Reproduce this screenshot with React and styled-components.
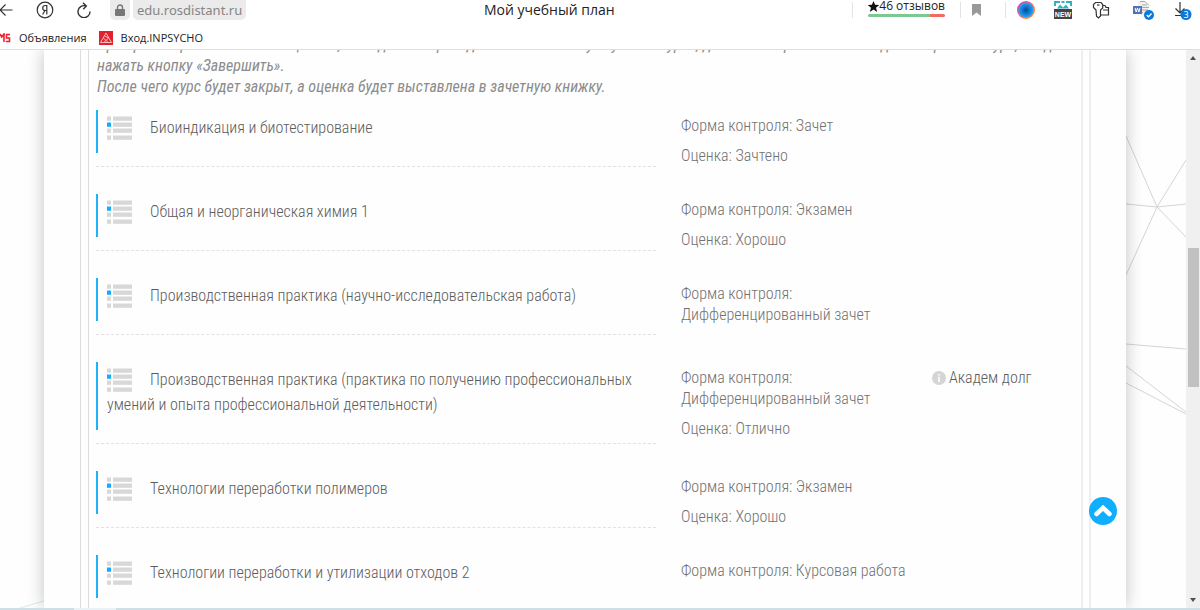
import React from "react";
import styled, { createGlobalStyle } from "styled-components";

const ui = `"Open Sans", "Noto Sans", sans-serif`;
const condensed = `"Roboto Condensed", "Roboto", sans-serif`;

const GlobalStyle = createGlobalStyle`
  * { box-sizing: border-box; }
  body { margin: 0; background: #fefefe; overflow: hidden; }
  ul, h1, h2, p { margin: 0; padding: 0; }
  ul { list-style: none; }
  svg { display: block; flex: none; }
`;

const Browser = styled.div`
  display: flex;
  flex-direction: column;
  height: 100vh;
  font-family: ${ui};
  color: #222;
`;

const Chrome = styled.header`
  flex: none;
  background: #fff;
  border-bottom: 1px solid #dedede;
`;

const Toolbar = styled.div`
  display: flex;
  align-items: center;
  height: 20px;
`;

const IconButton = styled.button`
  display: grid;
  place-items: center;
  flex: none;
  width: ${(p) => p.$width}px;
  height: 20px;
  padding: 0;
  border: 0;
  background: none;
`;

const AddressLock = styled(IconButton)`
  margin: 0 3px 0 19px;
  background: #ebebeb;
  border-radius: 0 0 5px 5px;
`;

const Address = styled.a`
  padding: 0 4px;
  border-radius: 0 0 5px 5px;
  background: #ebebeb;
  color: #858585;
  font-family: "Noto Sans", sans-serif;
  font-size: 13px;
  line-height: 20px;
  text-decoration: none;
`;

const PageName = styled.h1`
  flex: 1;
  font-size: 14px;
  line-height: 20px;
  font-weight: 400;
  text-align: center;
`;

const Divider = styled.span`
  width: 1px;
  height: 16px;
  background: #e3e3e3;
`;

const Rating = styled.a`
  align-self: flex-start;
  margin: 0 15px;
  color: #222;
  font-size: 12px;
  line-height: 12px;
  text-decoration: none;
  white-space: nowrap;

  &::after {
    content: "";
    display: block;
    height: 3px;
    border-radius: 2px;
    background: linear-gradient(90deg, #7cc893 81%, #f26b5e 81%);
  }
`;

const RatingText = styled.span`
  display: flex;
  align-items: center;
  padding-bottom: 2px;
`;

const Bookmarks = styled.nav`
  display: flex;
  align-items: center;
  height: 29px;
  padding-top: 7px;
`;

const Bookmark = styled.a`
  display: flex;
  align-items: center;
  gap: 8px;
  margin-right: 12px;
  color: #222;
  font-size: 11px;
  line-height: 16px;
  text-decoration: none;
`;

const Viewport = styled.div`
  position: relative;
  display: flex;
  flex: 1;
  min-height: 0;
`;

const Page = styled.div`
  position: relative;
  flex: 1;
  min-width: 0;
  overflow: hidden;
  padding: 0 60px 0 44px;
`;

const Network = styled.svg`
  position: absolute;
  top: 0;
  right: 0;
`;

const NetworkLeft = styled.svg`
  position: absolute;
  bottom: 0;
  left: 0;
`;

const Sheet = styled.main`
  position: relative;
  height: 100%;
  padding: 0 35px 0 36px;
  background: #fefefe;
  box-shadow: 0 0 16px rgba(0, 0, 0, 0.24);
`;

const Frame = styled.div`
  height: 100%;
  padding: 0 6px 0 7px;
  border-left: 1px solid #dcdcdc;
  border-right: 2px solid #efefef;
`;

const Plan = styled.section`
  height: 100%;
  padding: 0 7px;
  border-left: 1px solid #dcdcdc;
  border-right: 2px solid #efefef;
  overflow: hidden;
  font-family: ${condensed};
  font-weight: 300;
`;

const Intro = styled.p`
  margin-top: -16px;
  padding-left: 1px;
  margin-bottom: 13px;
  color: #8c8c8c;
  font-size: 16px;
  line-height: 21px;
  font-style: italic;
  font-weight: 400;
`;

const IntroLine = styled.span`
  display: block;
  white-space: nowrap;
`;

const Course = styled.li`
  display: grid;
  grid-template-columns: 585fr 251fr 142fr;
  align-items: start;
`;

const CourseMain = styled.div`
  margin: 0 25px 27px 0;
  padding-bottom: 13px;
  border-bottom: 1px dashed #e2e2e2;
`;

const CourseTitle = styled.h2`
  padding: 5px 0 13px 9px;
  border-left: 2px solid #1fb1fa;
  color: #5c5c5c;
  font-size: 16px;
  line-height: 25px;
  font-weight: 300;

  svg {
    display: inline-block;
    margin: -5px 18px -3px 0;
    vertical-align: middle;
  }
`;

const Details = styled.div`
  padding: 5px 16px 0 0;
  color: #717171;
  font-size: 16px;
  line-height: 21px;
`;

const Detail = styled.p`
  margin-bottom: 9px;
`;

const Debt = styled.p`
  display: flex;
  align-items: center;
  gap: 3px;
  padding-top: 5px;
  color: #5c5c5c;
  font-size: 16px;
  line-height: 21px;
`;

const Scrollbar = styled.div`
  display: flex;
  flex-direction: column;
  align-items: center;
  justify-content: space-between;
  flex: none;
  width: 14px;
  padding: 6px 0;
  background: #f0f0f0;
`;

const Track = styled.div`
  flex: 1;
  width: 11px;
  padding-top: 188px;
`;

const Thumb = styled.div`
  height: 139px;
  background: #c1c1c1;
`;

const ToTop = styled.button`
  position: absolute;
  right: 83px;
  bottom: 83px;
  display: grid;
  place-items: center;
  width: 28px;
  height: 28px;
  padding: 0;
  border: 0;
  border-radius: 50%;
  background: #10aeff;
`;

const Taskbar = styled.footer`
  flex: none;
  height: 2px;
  background: linear-gradient(90deg, #cfdfe6 74px, #e9f2f6 74px 116px, #cfdfe6 116px);
`;

const ListIcon = () => (
  <svg width="25" height="24" viewBox="0 0 25 24" aria-hidden="true">
    {[0, 6, 12, 19].map((y, i) => (
      <g key={y} fill="#d8d8d8">
        <rect x="0" y={y + 0.5} width="4" height="4.3" fill={i === 1 ? "#10aeff" : "#d8d8d8"} />
        <rect x="6" y={y + 0.5} width="19" height="4.3" />
      </g>
    ))}
  </svg>
);

const InfoIcon = () => (
  <svg width="14" height="14" viewBox="0 0 14 14" aria-hidden="true">
    <circle cx="7" cy="7" r="7" fill="#d5d5d5" />
    <path d="M6.2 3h1.6v1.5H6.2zM6.2 5.8h1.6V11H6.2z" fill="#fff" />
  </svg>
);

const Arrow = ({ down }) => (
  <svg width="6" height="4" viewBox="0 0 6 4" aria-hidden="true">
    <path d={down ? "M0 0h6L3 4z" : "M0 4h6L3 0z"} fill="#505050" />
  </svg>
);

const courses = [
  { title: "Биоиндикация и биотестирование", control: "Зачет", grade: "Зачтено" },
  { title: "Общая и неорганическая химия 1", control: "Экзамен", grade: "Хорошо" },
  { title: "Производственная практика (научно-исследовательская работа)", control: "Дифференцированный зачет" },
  {
    title: "Производственная практика (практика по получению профессиональных умений и опыта профессиональной деятельности)",
    control: "Дифференцированный зачет",
    grade: "Отлично",
    debt: "Академ долг",
  },
  { title: "Технологии переработки полимеров", control: "Экзамен", grade: "Хорошо" },
  { title: "Технологии переработки и утилизации отходов 2", control: "Курсовая работа" },
];

export default function App() {
  return (
    <Browser>
      <GlobalStyle />
      <Chrome>
        <Toolbar>
          <IconButton $width={13} aria-label="Назад">
            <svg width="13" height="14" viewBox="0 0 13 14" fill="none" stroke="#333" strokeWidth="1.2">
              <path d="M12.5 7H0M5.500 1.500L0 7l5.500 5.500" />
            </svg>
          </IconButton>
          <IconButton $width={64} aria-label="Яндекс">
            <svg width="18" height="18" viewBox="0 0 18 18" fill="none" stroke="#333" strokeWidth="1.2">
              <circle cx="9" cy="9" r="7.800" />
              <path d="M10.800 13.500v-9H9.300C7.600 4.500 6.700 5.500 6.700 7c0 1.500 1 2.500 2.500 2.500h1.500M9 9.500l-2.400 4" />
            </svg>
          </IconButton>
          <IconButton $width={14} aria-label="Обновить">
            <svg width="14" height="16" viewBox="0 0 14 16" fill="none" stroke="#333" strokeWidth="1.4">
              <path d="M13 9.500A6 6 0 1 1 9 4M6 .8L9.300 4 6.300 7.200" />
            </svg>
          </IconButton>
          <AddressLock $width={20} aria-label="Защищённое соединение">
            <svg width="10" height="12" viewBox="0 0 10 12">
              <path d="M2.500 5.500V3.500a2.500 2.500 0 0 1 5 0v2" fill="none" stroke="#777" strokeWidth="1.400" />
              <rect y="5" width="10" height="7" rx="1" fill="#777" />
            </svg>
          </AddressLock>
          <Address href="#">edu.rosdistant.ru</Address>
          <PageName>Мой учебный план</PageName>
          <Divider />
          <Rating href="#">
            <RatingText>
              <svg width="11" height="11" viewBox="1 0 11 11">
                <path d="M6.500 0l1.600 3.800 4.200.2L9 6.700 10.200 11 6.500 8.600 2.800 11 4 6.700.7 4l4.200-.2z" fill="#111" />
              </svg>
              46 отзывов
            </RatingText>
          </Rating>
          <Divider />
          <IconButton $width={44} aria-label="Закладка">
            <svg width="26" height="12" viewBox="0 0 26 12">
              <path d="M2 0h9v12L6.500 8.500 2 12z" fill="#999" />
            </svg>
          </IconButton>
          <Divider />
          <IconButton $width={40} aria-label="Расширение">
            <svg width="18" height="18" viewBox="0 0 18 18">
              <defs>
                <linearGradient id="ring" x1="0" y1="0" x2="1" y2="1">
                  <stop offset="0" stopColor="#c63be0" />
                  <stop offset="0.500" stopColor="#ff5a6b" />
                  <stop offset="1" stopColor="#ffb020" />
                </linearGradient>
                <radialGradient id="lens">
                  <stop offset="0" stopColor="#06478f" />
                  <stop offset="0.400" stopColor="#0d6fc8" />
                  <stop offset="1" stopColor="#28a8f5" />
                </radialGradient>
              </defs>
              <circle cx="9" cy="9" r="9" fill="url(#ring)" />
              <circle cx="9" cy="9" r="7.600" fill="url(#lens)" />
            </svg>
          </IconButton>
          <IconButton $width={34} aria-label="Новое">
            <svg width="18" height="18" viewBox="0 0 18 18">
              <path d="M1 5V1h5M17 5V1h-5M7.500 1h3" fill="none" stroke="#2fb4bd" strokeWidth="2" />
              <path d="M3 7.500l3-4 3 3 3-3 3 4z" fill="#2fb4bd" />
              <rect y="8" width="18" height="10" fill="#444" />
              <text x="9" y="16" textAnchor="middle" fontFamily="Liberation Sans" fontSize="7" fontWeight="700" fill="#fff">NEW</text>
            </svg>
          </IconButton>
          <IconButton $width={42} aria-label="Пароли">
            <svg width="18" height="18" viewBox="0 0 18 18" fill="none" stroke="#333" strokeWidth="1.200">
              <path d="M4 9L1.500 6.500V3.500L3.500 1.500h5.500l1.700 2V7L8.500 9v6L6.500 17 4.500 15.300z" />
              <path d="M5 4h2.500" />
              <path d="M10.700 4.500h2.300l1 2h2.500v7.500H8.500M11 9h5.500" />
            </svg>
          </IconButton>
          <IconButton $width={44} aria-label="Word">
            <svg width="22" height="20" viewBox="0 0 22 20">
              <path d="M5 1h7l4 4v10H5z" fill="#f1f1f1" />
              <path d="M7 1.500h5l4 4M9 5h5M9 7.500h7M9 10h6M6 12.500h4" fill="none" stroke="#aaa" />
              <rect y="6" width="9" height="8" fill="#5572b5" />
              <path d="M2 8l1.200 4 1.300-4 1.300 4L7 8" fill="none" stroke="#fff" />
              <circle cx="16" cy="15" r="5" fill="#0b78dc" />
              <path d="M13.700 15l1.800 1.800 3-3.300" fill="none" stroke="#fff" strokeWidth="1.300" />
            </svg>
          </IconButton>
          <IconButton $width={34} aria-label="Загрузки">
            <svg width="18" height="20" viewBox="0 0 18 20">
              <path d="M6 2v11M1.500 8.500L6 13l4.500-4.500M1 15.500h8" fill="none" stroke="#333" strokeWidth="1.200" />
              <circle cx="12" cy="14.500" r="5.500" fill="#0b78dc" />
              <text x="12" y="18" textAnchor="middle" fontFamily="Noto Sans" fontSize="9" fill="#fff">3</text>
            </svg>
          </IconButton>
        </Toolbar>
        <Bookmarks>
          <Bookmark href="#">
            <svg width="11" height="10" viewBox="0 0 11 10" fill="none" stroke="#f01f2d" strokeWidth="1.600">
              <path d="M0 1l1.700 3L4 1v8M10 1.500H6.500V5h3v3.500H5.800" />
            </svg>
            Объявления
          </Bookmark>
          <Bookmark href="#">
            <svg width="14" height="14" viewBox="0 0 14 14">
              <rect width="14" height="14" fill="#e5202d" />
              <path d="M7 2l5.500 9.500h-11zM4.300 7l5 4.500M9.700 7l-5 4.500M5.500 5l4.500 2" fill="none" stroke="#f8b9bd" />
            </svg>
            Вход.INPSYCHO
          </Bookmark>
        </Bookmarks>
      </Chrome>
      <Viewport>
        <Page>
          <Network width="60" height="400" viewBox="0 0 60 400" fill="none" stroke="#d4d4d4" aria-hidden="true">
            <path d="M0 86l31 71M60 110l-29 47M0 154l31 3 29-3M31 157l29 30M31 157L0 225M0 294l60 5M0 316l60 46M0 333l60 31" />
          </Network>
          <NetworkLeft width="44" height="8" viewBox="0 0 44 8" stroke="#d5e9f0" aria-hidden="true">
            <path d="M20 8l24-7" />
          </NetworkLeft>
          <Sheet>
            <Frame>
              <Plan>
                <Intro>
                  <IntroLine>
                    При просмотре и согласии с оценкой, выведенной преподавателем по итогу изучения курса, для его завершения необходимо перейти в курс, следом
                  </IntroLine>
                  <IntroLine>нажать кнопку «Завершить».</IntroLine>
                  <IntroLine>После чего курс будет закрыт, а оценка будет выставлена в зачетную книжку.</IntroLine>
                </Intro>
                <ul>
                  {courses.map((c) => (
                    <Course key={c.title}>
                      <CourseMain>
                        <CourseTitle>
                          <ListIcon />
                          {c.title}
                        </CourseTitle>
                      </CourseMain>
                      <Details>
                        <Detail>Форма контроля: {c.control}</Detail>
                        {c.grade && <Detail>Оценка: {c.grade}</Detail>}
                      </Details>
                      {c.debt && (
                        <Debt>
                          <InfoIcon />
                          {c.debt}
                        </Debt>
                      )}
                    </Course>
                  ))}
                </ul>
              </Plan>
            </Frame>
          </Sheet>
        </Page>
        <Scrollbar aria-hidden="true">
          <Arrow />
          <Track>
            <Thumb />
          </Track>
          <Arrow down />
        </Scrollbar>
        <ToTop aria-label="Наверх">
          <svg width="20" height="14" viewBox="0 0 20 14" fill="none" stroke="#fff" strokeWidth="4.500" strokeLinecap="round">
            <path d="M3.500 10L10 3.800l6.500 6.200" />
          </svg>
        </ToTop>
      </Viewport>
      <Taskbar />
    </Browser>
  );
}
